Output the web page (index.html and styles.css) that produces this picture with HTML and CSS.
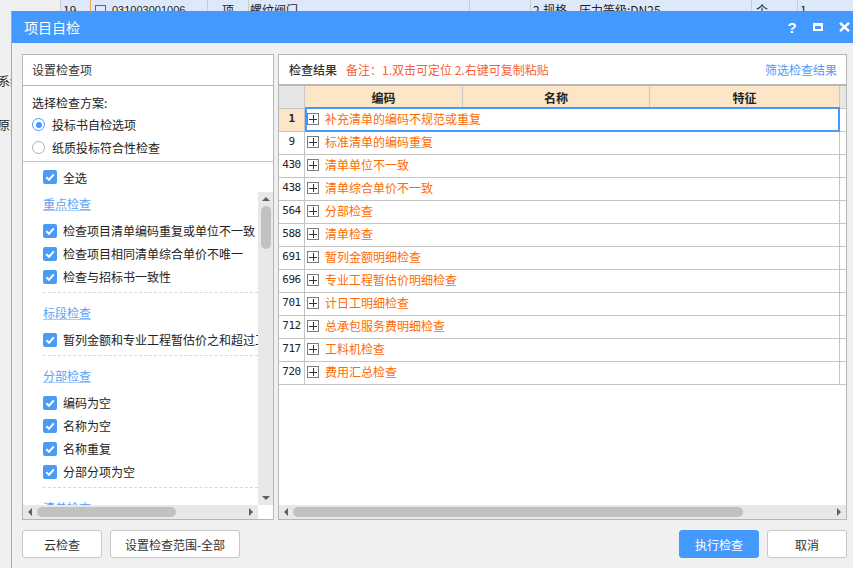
FILE: index.html
```html
<!DOCTYPE html>
<html lang="zh-CN">
<head>
<meta charset="utf-8">
<title>项目自检</title>
<link rel="stylesheet" href="styles.css">
</head>
<body>
<div class="bg-app">
  <div class="bg-row">
    <div class="bc bc-a"></div>
    <div class="bc bc-b">19</div>
    <div class="bc bc-c"><span class="bg-box"></span><span class="mono">031003001006</span></div>
    <div class="bc bc-d">项</div>
    <div class="bc bc-e">螺纹阀门</div>
    <div class="bc bc-f"></div>
    <div class="bc bc-g">2.规格、压力等级:DN25</div>
    <div class="bc bc-h">个</div>
    <div class="bc bc-i">1</div>
  </div>
  <div class="bg-left">
    <div class="bg-l1">系统</div>
    <div class="bg-l2">原则</div>
  </div>
</div>

<div class="dialog">
  <div class="titlebar">
    <span class="title">项目自检</span>
    <div class="tb-icons">
      <span class="tb-btn tb-help">?</span>
      <span class="tb-btn"><svg width="10" height="8" viewBox="0 0 10 8"><rect x="0" y="0" width="10" height="8" fill="#fff"/><rect x="2" y="3" width="6" height="3" fill="#4499ff"/></svg></span>
      <span class="tb-btn"><svg width="11" height="10" viewBox="0 0 11 10"><path d="M1 0.8 L10 9.2 M10 0.8 L1 9.2" stroke="#fff" stroke-width="2.4" fill="none"/></svg></span>
    </div>
  </div>
  <div class="dlg-body">
    <div class="panels">
      <div class="left-panel">
        <div class="lp-head">设置检查项</div>
        <div class="scheme">
          <div class="scheme-title">选择检查方案:</div>
          <div class="radio-row"><span class="radio on"></span><span>投标书自检选项</span></div>
          <div class="radio-row"><span class="radio"></span><span>纸质投标符合性检查</span></div>
        </div>
        <div class="selall"><span class="cb"><svg width="14" height="14" viewBox="0 0 14 14"><path d="M3.3 7.2 L6 9.8 L10.8 4.4" stroke="#fff" stroke-width="2" fill="none"/></svg></span><span>全选</span></div>
        <div class="scroll-area">
          <div class="scroll-content">
            <div class="group first">
              <div class="group-title">重点检查</div>
              <div class="check-item"><span class="cb"><svg width="14" height="14" viewBox="0 0 14 14"><path d="M3.3 7.2 L6 9.8 L10.8 4.4" stroke="#fff" stroke-width="2" fill="none"/></svg></span><span>检查项目清单编码重复或单位不一致</span></div>
              <div class="check-item"><span class="cb"><svg width="14" height="14" viewBox="0 0 14 14"><path d="M3.3 7.2 L6 9.8 L10.8 4.4" stroke="#fff" stroke-width="2" fill="none"/></svg></span><span>检查项目相同清单综合单价不唯一</span></div>
              <div class="check-item"><span class="cb"><svg width="14" height="14" viewBox="0 0 14 14"><path d="M3.3 7.2 L6 9.8 L10.8 4.4" stroke="#fff" stroke-width="2" fill="none"/></svg></span><span>检查与招标书一致性</span></div>
            </div>
            <div class="group">
              <div class="group-title">标段检查</div>
              <div class="check-item"><span class="cb"><svg width="14" height="14" viewBox="0 0 14 14"><path d="M3.3 7.2 L6 9.8 L10.8 4.4" stroke="#fff" stroke-width="2" fill="none"/></svg></span><span>暂列金额和专业工程暂估价之和超过工</span></div>
            </div>
            <div class="group">
              <div class="group-title">分部检查</div>
              <div class="check-item"><span class="cb"><svg width="14" height="14" viewBox="0 0 14 14"><path d="M3.3 7.2 L6 9.8 L10.8 4.4" stroke="#fff" stroke-width="2" fill="none"/></svg></span><span>编码为空</span></div>
              <div class="check-item"><span class="cb"><svg width="14" height="14" viewBox="0 0 14 14"><path d="M3.3 7.2 L6 9.8 L10.8 4.4" stroke="#fff" stroke-width="2" fill="none"/></svg></span><span>名称为空</span></div>
              <div class="check-item"><span class="cb"><svg width="14" height="14" viewBox="0 0 14 14"><path d="M3.3 7.2 L6 9.8 L10.8 4.4" stroke="#fff" stroke-width="2" fill="none"/></svg></span><span>名称重复</span></div>
              <div class="check-item"><span class="cb"><svg width="14" height="14" viewBox="0 0 14 14"><path d="M3.3 7.2 L6 9.8 L10.8 4.4" stroke="#fff" stroke-width="2" fill="none"/></svg></span><span>分部分项为空</span></div>
            </div>
            <div class="group">
              <div class="group-title">清单检查</div>
            </div>
          </div>
          <div class="vscroll">
            <div class="arr-box"><span class="tri-up"></span></div>
            <div class="vthumb"></div>
            <div class="spacer"></div>
            <div class="arr-box"><span class="tri-down"></span></div>
          </div>
        </div>
        <div class="hscroll-row">
          <div class="hscroll lp-hs">
            <div class="harr"><span class="tri-left"></span></div>
            <div class="hthumb lp-thumb"></div>
            <div class="spacer"></div>
            <div class="harr"><span class="tri-right"></span></div>
          </div>
          <div class="corner"></div>
        </div>
      </div>

      <div class="right-panel">
        <div class="rp-head">
          <span class="rp-title">检查结果</span>
          <span class="rp-note">备注：1.双击可定位 2.右键可复制粘贴</span>
          <span class="rp-filter">筛选检查结果</span>
        </div>
        <div class="grid-head">
          <div class="gh c-num"></div>
          <div class="gh c-code">编码</div>
          <div class="gh c-name">名称</div>
          <div class="gh c-feat">特征</div>
          <div class="gh c-strip"></div>
        </div>
        <div class="rows">
          <div class="row sel"><div class="r-num">1</div><div class="r-main"><span class="pbox"></span><span class="r-text">补充清单的编码不规范或重复</span></div><div class="r-strip"></div><div class="sel-box"></div></div>
          <div class="row"><div class="r-num">9</div><div class="r-main"><span class="pbox"></span><span class="r-text">标准清单的编码重复</span></div><div class="r-strip"></div></div>
          <div class="row"><div class="r-num">430</div><div class="r-main"><span class="pbox"></span><span class="r-text">清单单位不一致</span></div><div class="r-strip"></div></div>
          <div class="row"><div class="r-num">438</div><div class="r-main"><span class="pbox"></span><span class="r-text">清单综合单价不一致</span></div><div class="r-strip"></div></div>
          <div class="row"><div class="r-num">564</div><div class="r-main"><span class="pbox"></span><span class="r-text">分部检查</span></div><div class="r-strip"></div></div>
          <div class="row"><div class="r-num">588</div><div class="r-main"><span class="pbox"></span><span class="r-text">清单检查</span></div><div class="r-strip"></div></div>
          <div class="row"><div class="r-num">691</div><div class="r-main"><span class="pbox"></span><span class="r-text">暂列金额明细检查</span></div><div class="r-strip"></div></div>
          <div class="row"><div class="r-num">696</div><div class="r-main"><span class="pbox"></span><span class="r-text">专业工程暂估价明细检查</span></div><div class="r-strip"></div></div>
          <div class="row"><div class="r-num">701</div><div class="r-main"><span class="pbox"></span><span class="r-text">计日工明细检查</span></div><div class="r-strip"></div></div>
          <div class="row"><div class="r-num">712</div><div class="r-main"><span class="pbox"></span><span class="r-text">总承包服务费明细检查</span></div><div class="r-strip"></div></div>
          <div class="row"><div class="r-num">717</div><div class="r-main"><span class="pbox"></span><span class="r-text">工料机检查</span></div><div class="r-strip"></div></div>
          <div class="row"><div class="r-num">720</div><div class="r-main"><span class="pbox"></span><span class="r-text">费用汇总检查</span></div><div class="r-strip"></div></div>
        </div>
        <div class="grid-empty"></div>
        <div class="hscroll rp-hs">
          <div class="harr"><span class="tri-left"></span></div>
          <div class="hthumb rp-thumb"></div>
          <div class="spacer"></div>
          <div class="harr"><span class="tri-right"></span></div>
        </div>
      </div>
    </div>
    <div class="footer">
      <div class="btn">云检查</div>
      <div class="btn wide">设置检查范围-全部</div>
      <div class="btn primary">执行检查</div>
      <div class="btn">取消</div>
    </div>
  </div>
</div>
</body>
</html>
```

FILE: styles.css
```css
* { box-sizing: border-box; }

body {
  margin: 0;
  width: 853px;
  height: 568px;
  overflow: hidden;
  position: relative;
  background: #f0f0f0;
  font-family: "Noto Sans CJK SC", "Noto Sans", sans-serif;
  font-size: 12px;
  color: #222;
}

/* background application */
.bg-row {
  display: flex;
  height: 24px;
  margin-top: -2px;
  line-height: 24px;
  background: #dde8fb;
  color: #222;
  white-space: nowrap;
}
.bc { border-right: 1px solid #c6ccd6; overflow: hidden; flex: none; }
.bc-a { width: 61px; background: #f0f0f0; }
.bc-b { width: 30px; padding-left: 2px; border-right-color: #f0a850; }
.bc-c { width: 117px; padding-left: 4px; display: flex; align-items: center; }
.bg-box { width: 11px; height: 11px; border: 1px solid #666; margin-right: 6px; }
.mono { font-family: "Liberation Sans", sans-serif; font-size: 11px; }
.bc-d { width: 41px; text-align: center; }
.bc-e { width: 221px; padding-left: 1px; }
.bc-f { width: 61px; }
.bc-g { width: 221px; padding-left: 2px; }
.bc-h { width: 46px; padding-left: 4px; }
.bc-i { flex: 1; padding-left: 2px; border-right: none; }

.bg-left { width: 20px; margin-left: -2px; line-height: 16px; font-size: 12px; white-space: nowrap; }
.bg-l1 { margin-top: 51px; }
.bg-l2 { margin-top: 28px; }

/* dialog window */
.dialog {
  position: absolute;
  left: 11px;
  top: 11px;
  width: 850px;
  height: 560px;
  border-left: 1px solid #a8a8a8;
  background: #f0f0f0;
}

.titlebar {
  height: 32px;
  background: #4499ff;
  display: flex;
  align-items: center;
  padding: 0 4px 0 12px;
  color: #fff;
}
.title { font-size: 14px; }
.tb-icons { margin-left: auto; display: flex; }
.tb-btn {
  width: 26px;
  height: 32px;
  display: flex;
  align-items: center;
  justify-content: center;
}
.tb-help {
  font-family: "Liberation Sans", sans-serif;
  font-weight: bold;
  font-size: 15px;
  color: #fff;
}

.dlg-body { padding: 11px 0 0 10px; }

.panels { display: flex; gap: 4px; width: 825px; height: 466px; }

.left-panel, .right-panel {
  border: 1px solid #b6b6b6;
  background: #fff;
  display: flex;
  flex-direction: column;
}
.left-panel { width: 252px; }
.right-panel { width: 569px; }

.lp-head {
  height: 31px;
  line-height: 30px;
  padding-left: 9px;
  border-bottom: 1px solid #b6b6b6;
  color: #333;
}

.scheme {
  height: 76px;
  padding: 7px 0 0 9px;
  border-bottom: 1px solid #c4c4c4;
}
.scheme-title { line-height: 20px; }
.radio-row { height: 23px; display: flex; align-items: center; }
.radio {
  width: 13px;
  height: 13px;
  border-radius: 50%;
  border: 1px solid #b0b0b0;
  margin-right: 7px;
  position: relative;
  flex: none;
}
.radio.on { border-color: #4499ff; }
.radio.on::after {
  content: "";
  position: absolute;
  left: 2.5px;
  top: 2.5px;
  width: 6px;
  height: 6px;
  border-radius: 50%;
  background: #4499ff;
}

.selall { height: 30px; display: flex; align-items: center; padding-left: 20px; }

.cb {
  width: 14px;
  height: 14px;
  border-radius: 2px;
  background: #4a9bf5;
  margin-right: 6px;
  flex: none;
  display: flex;
}

.scroll-area { display: flex; height: 313px; }
.scroll-content { width: 235px; overflow: hidden; }

.group {
  margin-left: 20px;
  padding: 10px 0 4px;
  border-bottom: 1px dashed #d8d8d8;
}
.group.first { padding-top: 2px; }
.group-title {
  line-height: 20px;
  color: #5aa1f7;
  text-decoration: underline;
  text-decoration-color: #a9cdfa;
  margin-bottom: 5px;
}
.check-item { height: 23px; display: flex; align-items: center; white-space: nowrap; }

.vscroll {
  width: 15px;
  background: #e8e8e8;
  display: flex;
  flex-direction: column;
  align-items: center;
}
.arr-box { height: 14px; display: flex; align-items: center; justify-content: center; }
.tri-up { border-left: 4px solid transparent; border-right: 4px solid transparent; border-bottom: 4px solid #606060; }
.tri-down { border-left: 4px solid transparent; border-right: 4px solid transparent; border-top: 4px solid #606060; }
.tri-left { border-top: 4px solid transparent; border-bottom: 4px solid transparent; border-right: 4px solid #606060; }
.tri-right { border-top: 4px solid transparent; border-bottom: 4px solid transparent; border-left: 4px solid #606060; }
.vthumb { width: 10px; height: 43px; border-radius: 5px; background: #c1c1c1; }
.spacer { flex: 1; }

.hscroll-row { display: flex; height: 14px; }
.hscroll { display: flex; align-items: center; height: 14px; background: #e8e8e8; }
.lp-hs { width: 235px; }
.corner { width: 15px; background: #fff; }
.harr { width: 14px; height: 14px; display: flex; align-items: center; justify-content: center; flex: none; }
.hthumb { height: 10px; border-radius: 5px; background: #c1c1c1; }
.lp-thumb { width: 139px; }
.rp-thumb { width: 450px; }

/* right panel */
.rp-head {
  height: 31px;
  display: flex;
  align-items: center;
  padding: 0 9px 0 10px;
  border-bottom: 2px solid #b8b8b8;
}
.rp-title { color: #333; font-weight: 500; }
.rp-note { color: #f5623a; margin-left: 9px; }
.rp-filter { color: #4f9bf6; margin-left: auto; }

.grid-head { display: flex; height: 23px; border-bottom: 1px solid #c4c4c4; }
.gh {
  background: #fde6c8;
  border-right: 1px solid #c8c8c8;
  display: flex;
  align-items: center;
  justify-content: center;
  font-weight: bold;
  color: #222;
}
.gh.c-num { width: 26px; background: #e6e6e6; }
.c-code { width: 158px; }
.c-name { width: 187px; }
.c-feat { width: 190px; }
.gh.c-strip { width: 6px; background: #e6e6e6; border-right: none; }

.row {
  display: flex;
  height: 23px;
  border-bottom: 1px solid #c4c4c4;
  position: relative;
}
.r-num {
  width: 26px;
  border-right: 1px solid #c4c4c4;
  display: flex;
  align-items: center;
  justify-content: center;
  padding-bottom: 2px;
  line-height: 14px;
  font-family: "DejaVu Sans Mono", monospace;
  font-size: 11px;
  letter-spacing: -0.5px;
  color: #222;
}
.row.sel .r-num { background: #fde6c8; font-weight: bold; }
.r-main {
  width: 535px;
  border-right: 1px solid #c4c4c4;
  display: flex;
  align-items: center;
  padding-left: 2px;
  padding-bottom: 2px;
  line-height: 16px;
}
.r-strip { width: 6px; }
.pbox {
  width: 12px;
  height: 12px;
  border: 1px solid #7c7c7c;
  margin-right: 6px;
  flex: none;
  position: relative;
}
.pbox::before {
  content: "";
  position: absolute;
  left: 1px;
  top: 4.5px;
  width: 8px;
  height: 1px;
  background: #333;
}
.pbox::after {
  content: "";
  position: absolute;
  left: 4.5px;
  top: 1px;
  width: 1px;
  height: 8px;
  background: #333;
}
.r-text { color: #ff6a00; white-space: nowrap; }
.sel-box {
  position: absolute;
  left: 26px;
  top: -2px;
  width: 535px;
  height: 25px;
  border: 2px solid #4499ff;
}

.grid-empty { flex: 1; }
.rp-hs { width: 567px; }

/* footer */
.footer { display: flex; gap: 8px; width: 825px; margin-top: 10px; }
.btn {
  width: 80px;
  height: 28px;
  border: 1px solid #c8c8c8;
  border-radius: 3px;
  background: #fff;
  display: flex;
  align-items: center;
  justify-content: center;
  color: #333;
}
.btn.wide { width: 130px; }
.btn.primary { margin-left: auto; background: #4499ff; border-color: #4499ff; color: #fff; }
```
